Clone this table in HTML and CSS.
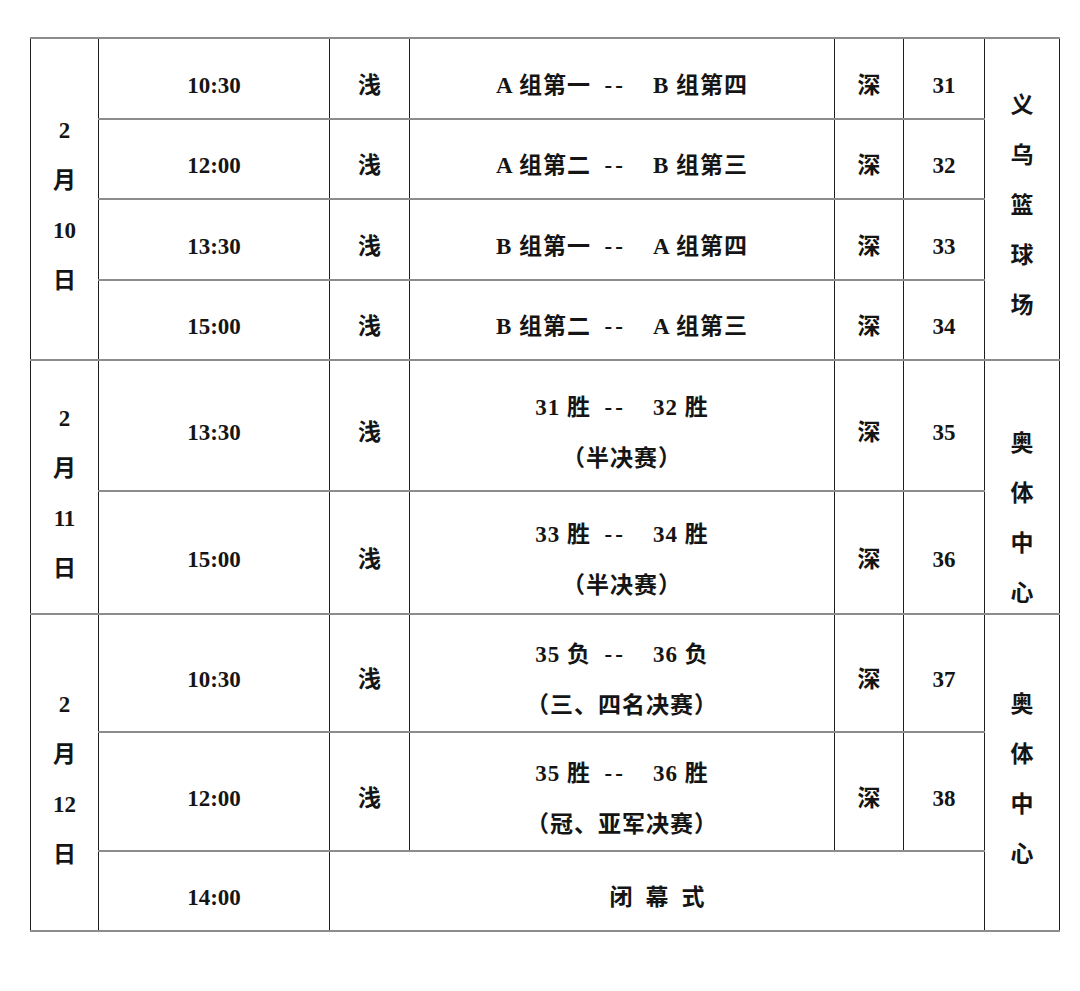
FILE: index.html
```html
<!DOCTYPE html>
<html lang="zh">
<head>
<meta charset="utf-8">
<title>赛程表</title>
<link rel="stylesheet" href="styles.css">
</head>
<body>
<table class="sched">
  <colgroup>
    <col class="c-date"><col class="c-time"><col class="c-side"><col class="c-match"><col class="c-side2"><col class="c-no"><col class="c-venue">
  </colgroup>
  <tbody>
    <tr class="h81">
      <td rowspan="4" class="vert"><div class="stack"><span>2</span><span>月</span><span>10</span><span>日</span></div></td>
      <td>10:30</td><td>浅</td><td class="match">A 组第一  <span class="dash">--</span>    B 组第四</td><td>深</td><td>31</td>
      <td rowspan="4" class="vert"><div class="stack"><span>义</span><span>乌</span><span>篮</span><span>球</span><span>场</span></div></td>
    </tr>
    <tr class="h80">
      <td>12:00</td><td>浅</td><td class="match">A 组第二  <span class="dash">--</span>    B 组第三</td><td>深</td><td>32</td>
    </tr>
    <tr class="h81">
      <td>13:30</td><td>浅</td><td class="match">B 组第一  <span class="dash">--</span>    A 组第四</td><td>深</td><td>33</td>
    </tr>
    <tr class="h80">
      <td>15:00</td><td>浅</td><td class="match">B 组第二  <span class="dash">--</span>    A 组第三</td><td>深</td><td>34</td>
    </tr>
    <tr class="h131">
      <td rowspan="2" class="vert"><div class="stack"><span>2</span><span>月</span><span>11</span><span>日</span></div></td>
      <td>13:30</td><td>浅</td><td class="match two"><div>31 胜  <span class="dash">--</span>    32 胜</div><div>（半决赛）</div></td><td>深</td><td>35</td>
      <td rowspan="2" class="vert top"><div class="stack low"><span>奥</span><span>体</span><span>中</span><span>心</span></div></td>
    </tr>
    <tr class="h123">
      <td>15:00</td><td>浅</td><td class="match two"><div>33 胜  <span class="dash">--</span>    34 胜</div><div>（半决赛）</div></td><td>深</td><td>36</td>
    </tr>
    <tr class="h118">
      <td rowspan="3" class="vert"><div class="stack"><span>2</span><span>月</span><span>12</span><span>日</span></div></td>
      <td>10:30</td><td>浅</td><td class="match two"><div>35 负  <span class="dash">--</span>    36 负</div><div>（三、四名决赛）</div></td><td>深</td><td>37</td>
      <td rowspan="3" class="vert"><div class="stack"><span>奥</span><span>体</span><span>中</span><span>心</span></div></td>
    </tr>
    <tr class="h119">
      <td>12:00</td><td>浅</td><td class="match two"><div>35 胜  <span class="dash">--</span>    36 胜</div><div>（冠、亚军决赛）</div></td><td>深</td><td>38</td>
    </tr>
    <tr class="h80">
      <td>14:00</td><td colspan="4"><div class="spaced"><span>闭</span><span>幕</span><span>式</span></div></td>
    </tr>
  </tbody>
</table>
</body>
</html>
```
FILE: styles.css
```css
html, body {
  margin: 0;
  padding: 0;
  background: #ffffff;
}

body {
  padding: 37px 0 0 30px;
  font-family: "Liberation Serif", "Noto Sans CJK SC", serif;
  font-weight: bold;
  font-size: 23px;
  color: #151515;
}

.sched {
  border-collapse: collapse;
  table-layout: fixed;
  width: 1029px;
}

.c-date { width: 68px; }
.c-time { width: 231px; }
.c-side { width: 80px; }
.c-match { width: 425px; }
.c-side2 { width: 69px; }
.c-no { width: 81px; }
.c-venue { width: 75px; }

.sched td {
  border-left: 1px solid #1e1e1e;
  border-right: 1px solid #1e1e1e;
  border-top: 2px solid #8c8c8c;
  border-bottom: 2px solid #8c8c8c;
  text-align: center;
  vertical-align: middle;
  padding: 14px 0 0 0;
  line-height: 26px;
}

.h80 { height: 80px; }
.h81 { height: 81px; }
.h118 { height: 118px; }
.h119 { height: 119px; }
.h123 { height: 123px; }
.h131 { height: 131px; }

.match {
  white-space: pre;
  letter-spacing: 1px;
}

.match.two {
  line-height: 51px;
}

.dash {
  letter-spacing: 3px;
}

.stack {
  display: flex;
  flex-direction: column;
  align-items: center;
  line-height: 50px;
}

.vert {
  padding-top: 16px;
}

.vert.top {
  vertical-align: top;
  padding-top: 58px;
}

.stack.low {
  margin-bottom: -30px;
}

.spaced {
  display: flex;
  justify-content: center;
  gap: 13px;
}
```
